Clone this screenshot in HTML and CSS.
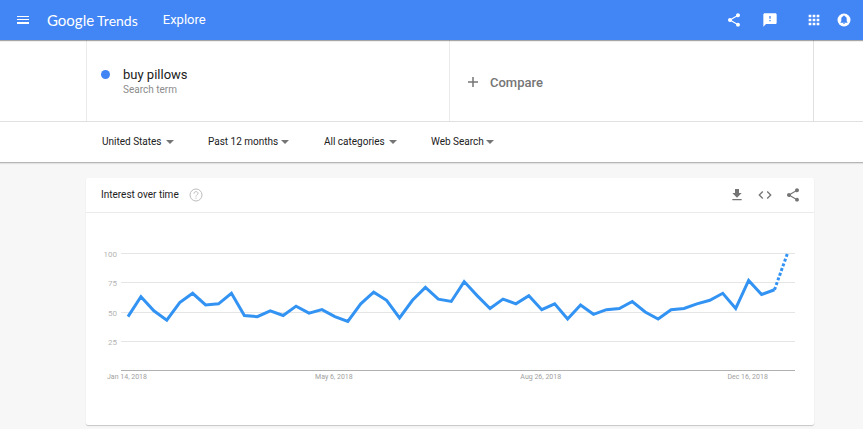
FILE: index.html
```html
<!DOCTYPE html>
<html lang="en">
<head>
    <meta charset="UTF-8">
    <meta name="viewport" content="width=device-width, initial-scale=1.0">
    <title>buy pillows - Explore - Google Trends</title>
    <link rel="stylesheet" href="styles.css">
</head>
<body>

<!-- Top bar -->
<header class="topbar">
    <button class="icon-btn menu-btn" aria-label="Main menu">
        <svg width="12" height="8" viewBox="0 0 12 8"><path fill="currentColor" d="M0 0h12v1H0zM0 3h12v1H0zM0 6h12v2H0z"/></svg>
    </button>
    <a class="logo" href="#"><span class="logo-google">Google</span><span class="logo-trends">Trends</span></a>
    <h1 class="page-name">Explore</h1>
    <div class="topbar-actions">
        <button class="icon-btn" aria-label="Share">
            <svg width="16" height="16" viewBox="0 0 24 24"><path fill="currentColor" d="M18 16.08c-.76 0-1.44.3-1.96.77L8.91 12.7c.05-.23.09-.46.09-.7s-.04-.47-.09-.7l7.05-4.11c.54.5 1.25.81 2.04.81 1.66 0 3-1.34 3-3s-1.34-3-3-3-3 1.34-3 3c0 .24.04.47.09.7L8.04 9.81C7.5 9.31 6.79 9 6 9c-1.66 0-3 1.34-3 3s1.34 3 3 3c.79 0 1.5-.31 2.04-.81l7.12 4.16c-.05.21-.08.43-.08.65 0 1.61 1.31 2.92 2.92 2.92s2.92-1.31 2.92-2.92-1.31-2.92-2.92-2.92z"/></svg>
        </button>
        <button class="icon-btn feedback-btn" aria-label="Send feedback">
            <svg width="16" height="16" viewBox="0 0 24 24"><path fill="currentColor" d="M20 2H4c-1.1 0-1.99.9-1.99 2L2 22l4-4h14c1.1 0 2-.9 2-2V4c0-1.1-.9-2-2-2zm-7 12h-2v-2h2v2zm0-4h-2V6h2v4z"/></svg>
        </button>
        <button class="icon-btn apps-btn" aria-label="Google apps">
            <svg width="16" height="16" viewBox="0 0 24 24"><path fill="currentColor" d="M4 8h4V4H4v4zm6 12h4v-4h-4v4zm-6 0h4v-4H4v4zm0-6h4v-4H4v4zm6 0h4v-4h-4v4zm6-10v4h4V4h-4zm-6 4h4V4h-4v4zm6 6h4v-4h-4v4zm0 6h4v-4h-4v4z"/></svg>
        </button>
        <button class="icon-btn" aria-label="Notifications">
            <svg width="14" height="14" viewBox="0 0 14 14">
                <circle cx="7" cy="7" r="6.5" fill="currentColor"/>
                <path fill="#4285f4" d="M7 2.5c-.5 0-.8.3-.8.8C4.9 3.7 4.3 4.7 4.3 6v2.3l-.8.9v.5h7v-.5l-.8-.9V6c0-1.3-.6-2.3-1.9-2.7 0-.5-.3-.8-.8-.8zM6.1 10.2a.9.9 0 0 0 1.8 0z"/>
            </svg>
        </button>
    </div>
</header>

<!-- Search terms -->
<section class="terms">
    <div class="terms-row">
        <div class="term">
            <span class="term-dot"></span>
            <div>
                <div class="term-name">buy pillows</div>
                <div class="term-type">Search term</div>
            </div>
        </div>
        <button class="compare">
            <svg width="10" height="10" viewBox="0 0 10 10" fill="none" stroke="currentColor" stroke-width="1.5"><path d="M5 0v10M0 5h10"/></svg>
            Compare
        </button>
    </div>
</section>

<!-- Filters -->
<section class="filters">
    <div class="filter filter-geo">
        <select aria-label="Location"><option>United States</option></select>
    </div>
    <div class="filter filter-time">
        <select aria-label="Time range"><option>Past 12 months</option></select>
    </div>
    <div class="filter filter-category">
        <select aria-label="Category"><option>All categories</option></select>
    </div>
    <div class="filter filter-source">
        <select aria-label="Search type"><option>Web Search</option></select>
    </div>
</section>

<!-- Interest over time -->
<main class="content">
    <section class="card">
        <div class="card-header">
            <h2>Interest over time</h2>
            <button class="icon-btn help-btn" aria-label="Help">
                <svg width="14" height="14" viewBox="0 0 14 14" fill="none" stroke="currentColor">
                    <circle cx="7" cy="7" r="6"/>
                    <path d="M5 5.7C5 4.4 5.8 3.6 7 3.6s2 .8 2 1.8c0 1.3-2 1.5-2 3.1M7 9.6v1.2"/>
                </svg>
            </button>
            <div class="card-actions">
                <button class="icon-btn" aria-label="Download CSV">
                    <svg width="16" height="16" viewBox="0 0 24 24"><path fill="currentColor" d="M19 9h-4V3H9v6H5l7 7 7-7zM5 18v2h14v-2H5z"/></svg>
                </button>
                <button class="icon-btn" aria-label="Embed">
                    <svg width="16" height="16" viewBox="0 0 24 24"><path fill="currentColor" d="M9.4 16.6L4.8 12l4.6-4.6L8 6l-6 6 6 6 1.4-1.4zm5.2 0l4.6-4.6-4.6-4.6L16 6l6 6-6 6-1.4-1.4z"/></svg>
                </button>
                <button class="icon-btn" aria-label="Share chart">
                    <svg width="16" height="16" viewBox="0 0 24 24"><path fill="currentColor" d="M18 16.08c-.76 0-1.44.3-1.96.77L8.91 12.7c.05-.23.09-.46.09-.7s-.04-.47-.09-.7l7.05-4.11c.54.5 1.25.81 2.04.81 1.66 0 3-1.34 3-3s-1.34-3-3-3-3 1.34-3 3c0 .24.04.47.09.7L8.04 9.81C7.5 9.31 6.79 9 6 9c-1.66 0-3 1.34-3 3s1.34 3 3 3c.79 0 1.5-.31 2.04-.81l7.12 4.16c-.05.21-.08.43-.08.65 0 1.61 1.31 2.92 2.92 2.92s2.92-1.31 2.92-2.92-1.31-2.92-2.92-2.92z"/></svg>
                </button>
            </div>
        </div>
        <svg class="chart" viewBox="0 0 728 212" role="img" aria-label="Interest over time">
            <g id="grid"></g>
            <polyline id="line" class="line"/>
            <polyline id="partial" class="line partial"/>
        </svg>
    </section>
</main>

<script>
    const values = [
        46, 63, 51, 43, 58, 66, 56, 57, 66, 47, 46, 51, 47, 55, 49, 52, 46, 42,
        57, 67, 60, 45, 60, 71, 61, 59, 76, 64, 53, 61, 57, 64, 52, 57, 44, 56,
        48, 52, 53, 59, 50, 44, 52, 53, 57, 60, 66, 53, 77, 65, 69, 100
    ];
    const dates = { 0: 'Jan 14, 2018', 16: 'May 6, 2018', 32: 'Aug 26, 2018', 48: 'Dec 16, 2018' };

    const left = 42, step = 12.93, bottom = 157.5, height = 117;
    const x = i => left + i * step;
    const y = value => bottom - value * height / 100;

    // Grid lines and value labels
    let grid = '';
    [0, 25, 50, 75, 100].forEach(value => {
        const lineY = Math.floor(y(value)) + 0.5;
        grid += `<line class="${value === 0 ? 'axis' : 'grid-line'}" x1="35" x2="709" y1="${lineY}" y2="${lineY}"/>`;
        if (value > 0) {
            grid += `<text class="value-label" x="31" y="${lineY + 3}">${value}</text>`;
        }
    });

    // Date labels
    for (const i in dates) {
        grid += `<text class="date-label" x="${x(i) - 1}" y="166">${dates[i]}</text>`;
    }
    document.getElementById('grid').innerHTML = grid;

    // The last week is not complete yet, so it is dotted
    const points = values.map((value, i) => `${x(i)},${y(value)}`);
    document.getElementById('line').setAttribute('points', points.slice(0, -1).join(' '));
    document.getElementById('partial').setAttribute('points', points.slice(-2).join(' '));
</script>

</body>
</html>
```

FILE: styles.css
```css
body {
    margin: 0;
    font-family: Roboto, "Liberation Sans", sans-serif;
    background-color: #f7f7f7;
    color: #212121;
}
h1, h2 {
    margin: 0;
    font-weight: 400;
}
button, select {
    font-family: inherit;
    border: none;
    background: none;
    padding: 0;
    cursor: pointer;
}
svg {
    display: block;
}
.icon-btn {
    color: inherit;
}

/* Top bar */
.topbar {
    position: relative;
    display: flex;
    align-items: center;
    height: 40px;
    padding: 0 12px 0 17px;
    background-color: #4285f4;
    color: #fff;
    box-shadow: 0 1px 1px rgba(0, 0, 0, 0.35);
}
.logo {
    display: flex;
    align-items: baseline;
    gap: 3px;
    margin-left: 18px;
    color: #fff;
    font-family: Lato, sans-serif;
    font-size: 14px;
    line-height: 18px;
    text-decoration: none;
}
.logo-google {
    font-size: 15px;
}
.page-name {
    margin-left: 25px;
    font-size: 13px;
    line-height: 18px;
}
.topbar-actions {
    display: flex;
    align-items: center;
    margin-left: auto;
}
.feedback-btn {
    margin-left: 20px;
}
.apps-btn {
    margin: 0 15px 0 28px;
}

/* Search terms */
.terms {
    padding: 0 49px 0 86px;
    background-color: #fff;
    border-bottom: 1px solid #e0e0e0;
}
.terms-row {
    display: grid;
    grid-template-columns: 1fr 1fr;
    height: 81px;
    border-left: 1px solid #ebebeb;
    border-right: 1px solid #e0e0e0;
}
.term {
    display: flex;
    align-items: center;
    gap: 13px;
    padding: 2px 0 0 14px;
    border-right: 1px solid #ebebeb;
}
.term-dot {
    width: 9px;
    height: 9px;
    margin-bottom: 14px;
    border-radius: 50%;
    background-color: #4285f4;
}
.term-name {
    font-size: 13px;
    line-height: 16px;
}
.term-type {
    font-size: 10px;
    line-height: 14px;
    color: #8c8c8c;
}
.compare {
    display: flex;
    align-items: center;
    gap: 12px;
    padding: 3px 0 0 18px;
    font-size: 13px;
    font-weight: 500;
    color: #757575;
}

/* Filters */
.filters {
    display: flex;
    align-items: center;
    height: 40px;
    padding-left: 102px;
    background-color: #fff;
    border-bottom: 1px solid #b5b5b5;
    box-shadow: 0 1px 1px rgba(0, 0, 0, 0.08);
}
.filter {
    display: flex;
    align-items: center;
    gap: 4px;
}
.filter::after {
    content: "";
    border: 4px solid transparent;
    border-top-color: #757575;
    border-bottom: none;
}
.filter select {
    appearance: none;
    font-size: 10px;
    line-height: 16px;
    color: #212121;
}
.filter-geo {
    margin-right: 34px;
}
.filter-time {
    gap: 2px;
    margin-right: 35px;
}
.filter-category {
    margin-right: 34px;
}
.filter-source {
    gap: 2px;
}

/* Card */
.content {
    padding: 15px 49px 3px 86px;
}
.card {
    background-color: #fff;
    border-radius: 2px;
    box-shadow: 0 1px 1px rgba(0, 0, 0, 0.2);
}
.card-header {
    display: flex;
    align-items: center;
    height: 34px;
    padding: 0 13px 0 15px;
    border-bottom: 1px solid #ebebeb;
}
.card-header h2 {
    font-size: 10px;
    line-height: 16px;
}
.help-btn {
    margin-left: 10px;
    color: #bdbdbd;
}
.card-actions {
    display: flex;
    gap: 12px;
    margin-left: auto;
    color: #757575;
}

/* Chart */
.chart {
    width: 100%;
}
.grid-line {
    stroke: #e5e5e5;
}
.axis {
    stroke: #b0b0b0;
}
.value-label {
    font-size: 8px;
    fill: #b5b5b5;
    text-anchor: end;
}
.date-label {
    font-size: 7px;
    fill: #a0a0a0;
    text-anchor: middle;
}
.line {
    fill: none;
    stroke: #3393f3;
    stroke-width: 3;
}
.partial {
    stroke-dasharray: 3 2;
}
```
